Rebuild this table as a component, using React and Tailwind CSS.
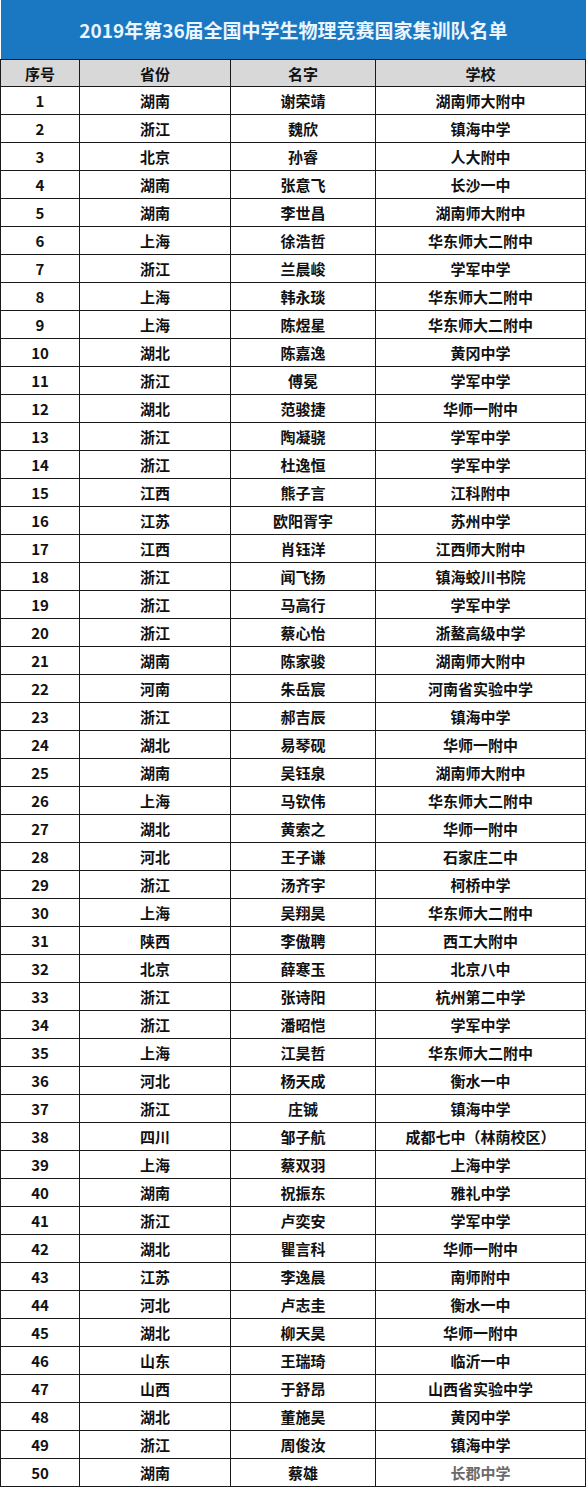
import React from "react";

const rows = [
  ["1", "湖南", "谢荣靖", "湖南师大附中"],
  ["2", "浙江", "魏欣", "镇海中学"],
  ["3", "北京", "孙睿", "人大附中"],
  ["4", "湖南", "张意飞", "长沙一中"],
  ["5", "湖南", "李世昌", "湖南师大附中"],
  ["6", "上海", "徐浩哲", "华东师大二附中"],
  ["7", "浙江", "兰晨峻", "学军中学"],
  ["8", "上海", "韩永琰", "华东师大二附中"],
  ["9", "上海", "陈煜星", "华东师大二附中"],
  ["10", "湖北", "陈嘉逸", "黄冈中学"],
  ["11", "浙江", "傅冕", "学军中学"],
  ["12", "湖北", "范骏捷", "华师一附中"],
  ["13", "浙江", "陶凝骁", "学军中学"],
  ["14", "浙江", "杜逸恒", "学军中学"],
  ["15", "江西", "熊子言", "江科附中"],
  ["16", "江苏", "欧阳胥宇", "苏州中学"],
  ["17", "江西", "肖钰洋", "江西师大附中"],
  ["18", "浙江", "闻飞扬", "镇海蛟川书院"],
  ["19", "浙江", "马高行", "学军中学"],
  ["20", "浙江", "蔡心怡", "浙鳌高级中学"],
  ["21", "湖南", "陈家骏", "湖南师大附中"],
  ["22", "河南", "朱岳宸", "河南省实验中学"],
  ["23", "浙江", "郝吉辰", "镇海中学"],
  ["24", "湖北", "易琴砚", "华师一附中"],
  ["25", "湖南", "吴钰泉", "湖南师大附中"],
  ["26", "上海", "马钦伟", "华东师大二附中"],
  ["27", "湖北", "黄索之", "华师一附中"],
  ["28", "河北", "王子谦", "石家庄二中"],
  ["29", "浙江", "汤齐宇", "柯桥中学"],
  ["30", "上海", "吴翔昊", "华东师大二附中"],
  ["31", "陕西", "李傲聘", "西工大附中"],
  ["32", "北京", "薛寒玉", "北京八中"],
  ["33", "浙江", "张诗阳", "杭州第二中学"],
  ["34", "浙江", "潘昭恺", "学军中学"],
  ["35", "上海", "江昊哲", "华东师大二附中"],
  ["36", "河北", "杨天成", "衡水一中"],
  ["37", "浙江", "庄铖", "镇海中学"],
  ["38", "四川", "邹子航", "成都七中（林荫校区）"],
  ["39", "上海", "蔡双羽", "上海中学"],
  ["40", "湖南", "祝振东", "雅礼中学"],
  ["41", "浙江", "卢奕安", "学军中学"],
  ["42", "湖北", "瞿言科", "华师一附中"],
  ["43", "江苏", "李逸晨", "南师附中"],
  ["44", "河北", "卢志圭", "衡水一中"],
  ["45", "湖北", "柳天昊", "华师一附中"],
  ["46", "山东", "王瑞琦", "临沂一中"],
  ["47", "山西", "于舒昂", "山西省实验中学"],
  ["48", "湖北", "董施昊", "黄冈中学"],
  ["49", "浙江", "周俊汝", "镇海中学"],
  ["50", "湖南", "蔡雄", "长郡中学"],
];

function Row({ cells, header, last }) {
  return (
    <div
      className={
        "grid grid-cols-[79px_151px_145px_210px] h-[28px] border-b border-[#1a1a1a] " +
        (header ? "bg-[#d8d8d8] border-t" : "bg-white")
      }
    >
      {cells.map((c, i) => (
        <div
          key={i}
          className={
            "flex items-center justify-center border-r border-[#1a1a1a] text-[15px] font-bold leading-none " +
            (last && i === 3 ? "text-[#6a6a6a]" : "text-[#111111]")
          }
        >
          {c}
        </div>
      ))}
    </div>
  );
}

export default function App() {
  return (
    <div
      className="w-[588px] bg-white"
      style={{ fontFamily: '"Noto Sans CJK SC", "Noto Sans", sans-serif' }}
    >
      <div className="w-[586px]">
        <div className="ml-[1px] w-[585px] h-[59px] bg-[#1a78c2] flex items-center justify-center">
          <span className="text-[19px] font-bold text-[#eaf5ff] leading-none">
            2019年第36届全国中学生物理竞赛国家集训队名单
          </span>
        </div>
        <div className="border-l border-[#1a1a1a]">
          <Row cells={["序号", "省份", "名字", "学校"]} header />
          {rows.map((r, i) => (
            <Row key={i} cells={r} last={i === rows.length - 1} />
          ))}
        </div>
      </div>
    </div>
  );
}
